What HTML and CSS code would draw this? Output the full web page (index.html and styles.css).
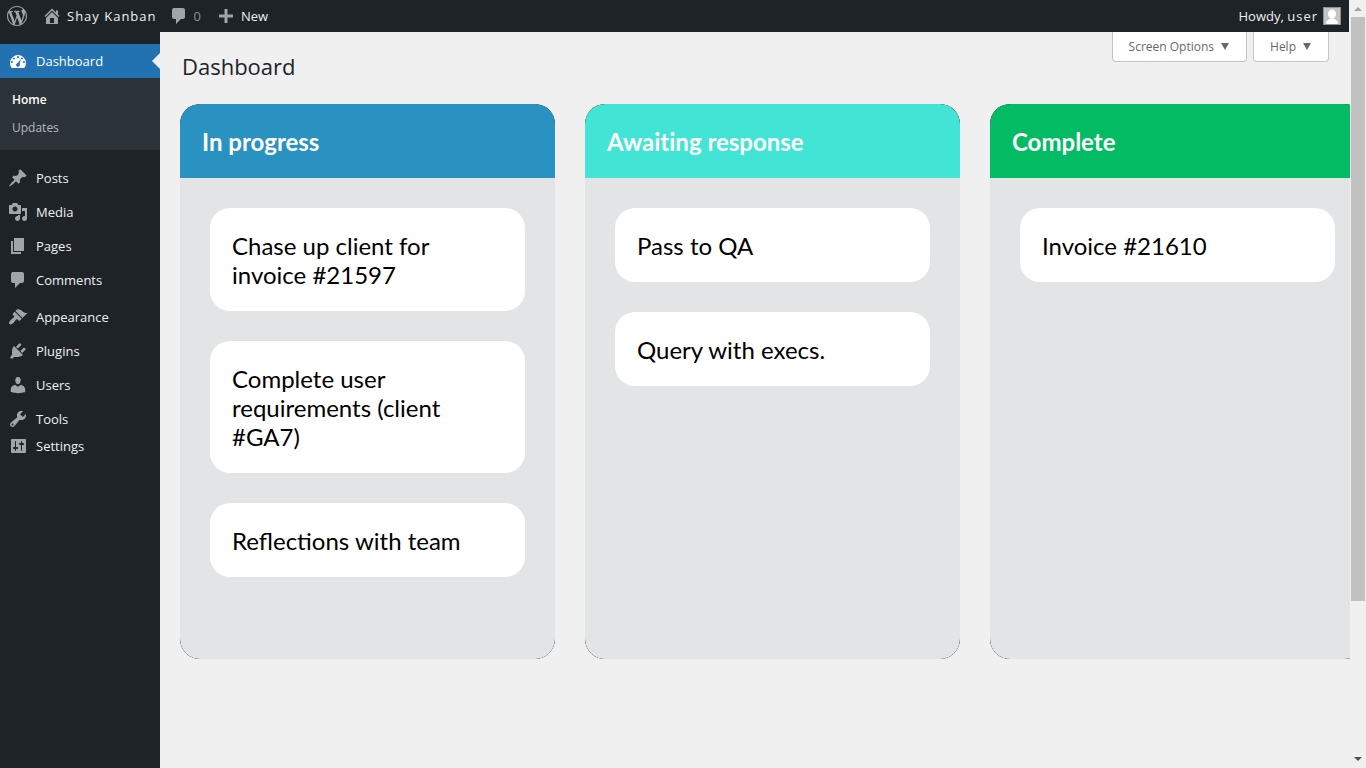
FILE: index.html
```html
<!DOCTYPE html>
<html lang="en">
<head>
<meta charset="utf-8">
<meta name="viewport" content="width=device-width, initial-scale=1">
<title>Dashboard - Shay Kanban</title>
<link rel="stylesheet" href="styles.css">
</head>
<body>
<div class="page">
  <div class="app">
    <header class="adminbar">
      <a class="bar-item bar-logo" href="#" aria-label="About WordPress"><svg class="icon" viewBox="0 0 20 20"><path d="M20 10c0-5.510-4.490-10-10-10C4.480 0 0 4.490 0 10c0 5.520 4.480 10 10 10 5.510 0 10-4.480 10-10zM7.780 15.370L4.370 6.220c.55-.02 1.170-.08 1.170-.08.5-.06.44-1.130-.06-1.110 0 0-1.450.11-2.370.11-.18 0-.37 0-.58-.01C4.120 2.690 6.870 1.110 10 1.110c2.330 0 4.450.87 6.050 2.340-.68-.11-1.650.39-1.650 1.580 0 .74.45 1.360.9 2.100.35.61.55 1.360.55 2.460 0 1.490-1.400 5-1.400 5l-3.030-8.370c.54-.02.82-.17.82-.17.5-.05.44-1.250-.06-1.220 0 0-1.440.12-2.380.12-.87 0-2.330-.12-2.330-.12-.5-.03-.56 1.200-.06 1.220l.92.08 1.260 3.410zM17.410 10c.24-.64.74-1.870.43-4.250.7 1.290 1.050 2.710 1.050 4.250 0 3.290-1.730 6.240-4.400 7.780.97-2.590 1.940-5.200 2.920-7.780zM6.100 18.090C3.120 16.650 1.110 13.530 1.110 10c0-1.300.23-2.480.72-3.590C3.250 10.300 4.670 14.200 6.100 18.090zm4.030-6.630l2.580 6.980c-.86.29-1.760.45-2.710.45-.79 0-1.570-.11-2.290-.33.81-2.380 1.620-4.740 2.420-7.100z"/></svg></a>
      <a class="bar-item bar-site" href="#"><svg class="icon" viewBox="0 0 20 20"><path fill-rule="evenodd" d="M16 8.500l1.530 1.530-1.060 1.060L10 4.600l-6.470 6.490-1.060-1.060L10 2.500l4 4v-2h2v4zm-6-2.460l6 5.990V18H4v-5.970zM12 17v-5H8v5h4z"/></svg><span>Shay Kanban</span></a>
      <a class="bar-item bar-comments" href="#" aria-label="0 comments"><svg class="icon" viewBox="0 0 20 20"><path d="M5 2h9c1.100 0 2 .9 2 2v7c0 1.100-.9 2-2 2h-2l-5 5v-5H5c-1.100 0-2-.9-2-2V4c0-1.100.9-2 2-2z"/></svg><span>0</span></a>
      <a class="bar-item" href="#"><svg class="icon" viewBox="0 0 20 20"><path d="M17 8.500v3h-5.500V17h-3v-5.500H3v-3h5.500V3h3v5.500z"/></svg><span>New</span></a>
      <a class="bar-item bar-user" href="#"><span>Howdy, <b>user</b></span><svg class="avatar" viewBox="0 0 18 18"><rect class="avatar-frame" width="18" height="18"/><rect class="avatar-fill" x="1" y="1" width="16" height="16"/><ellipse class="avatar-body" cx="9" cy="7" rx="4" ry="4.500"/><path class="avatar-body" d="M3 17c0-2.500 1-4 4.500-5.500h3C14 13 15 14.500 15 17z"/></svg></a>
    </header>

    <nav class="sidebar" aria-label="Main menu">
      <a class="menu-item current" href="#"><svg class="icon" viewBox="0 0 20 20"><path fill-rule="evenodd" d="M3.760 17h12.480A8 8 0 1 0 3.760 17zM10 5a1 1 0 1 1 0 2 1 1 0 0 1 0-2zM6 6.500a1 1 0 1 1 0 2 1 1 0 0 1 0-2zm8 0a1 1 0 1 1 0 2 1 1 0 0 1 0-2zm-9 4.500a1 1 0 1 1-2 0 1 1 0 0 1 2 0zm12 0a1 1 0 1 1-2 0 1 1 0 0 1 2 0zm-4.300-3.100l-1 5.300c.5 1.300-.3 2.500-1.700 2.500s-2.200-1.400-1.700-2.500c.3-.7.8-1 1.500-1.100z"/></svg><span>Dashboard</span></a>
      <div class="submenu">
        <a class="active" href="#">Home</a>
        <a href="#">Updates</a>
      </div>
      <div class="menu-group">
        <a class="menu-item" href="#"><svg class="icon" viewBox="0 0 20 20"><path d="M10.440 3.020l1.820-1.820 6.360 6.350-1.830 1.820c-1.050-.68-2.480-.57-3.410.36l-.75.75c-.92.93-1.040 2.350-.35 3.410l-1.830 1.820-2.410-2.410-2.800 2.790c-.42.42-3.380 2.710-3.800 2.290s1.860-3.390 2.280-3.810l2.790-2.790L4.100 9.360l1.830-1.820c1.050.69 2.480.57 3.400-.36l.75-.75c.93-.92 1.050-2.350.36-3.410z"/></svg><span>Posts</span></a>
        <a class="menu-item" href="#"><svg class="icon" viewBox="0 0 20 20"><path fill-rule="evenodd" d="M13 11V4c0-.55-.45-1-1-1h-1.670L9 1H5L3.670 3H2c-.55 0-1 .45-1 1v7c0 .55.45 1 1 1h10c.55 0 1-.45 1-1zM7 4.500c1.380 0 2.500 1.120 2.500 2.500S8.380 9.500 7 9.500 4.500 8.380 4.500 7 5.620 4.500 7 4.500zM14 6h5v10.500c0 1.380-1.120 2.500-2.500 2.500S14 17.880 14 16.500s1.120-2.500 2.500-2.500c.17 0 .34.020.5.050V9h-3V6zm-4 8.050V13h2v3.500c0 1.380-1.120 2.500-2.500 2.500S7 17.880 7 16.500 8.120 14 9.500 14c.17 0 .34.020.5.050z"/></svg><span>Media</span></a>
        <a class="menu-item" href="#"><svg class="icon" viewBox="0 0 20 20"><path d="M6 15V2h10v13H6zm-1 1h8v2H3V5h2v11z"/></svg><span>Pages</span></a>
        <a class="menu-item" href="#"><svg class="icon" viewBox="0 0 20 20"><path d="M5 2h9c1.100 0 2 .9 2 2v7c0 1.100-.9 2-2 2h-2l-5 5v-5H5c-1.100 0-2-.9-2-2V4c0-1.100.9-2 2-2z"/></svg><span>Comments</span></a>
      </div>
      <div class="menu-group">
        <a class="menu-item" href="#"><svg class="icon" viewBox="0 0 20 20"><path d="M14.480 11.060L7.410 3.990l1.500-1.500c.5-.56 2.300-.47 3.510.32 1.210.8 1.430 1.280 2.910 2.100 1.180.64 2.450 1.260 4.450.85zm-.71.71L6.700 4.700 4.930 6.470c-.39.39-.39 1.020 0 1.410l1.060 1.060c.39.39.39 1.030 0 1.420-.6.6-1.430 1.110-2.210 1.690-.35.26-.7.53-1.010.84C1.430 14.230.4 16.080 1.400 17.070c.99 1 2.840-.03 4.180-1.360.31-.31.58-.66.85-1.020.57-.78 1.080-1.610 1.690-2.210.39-.39 1.020-.39 1.410 0l1.060 1.060c.39.39 1.020.39 1.410 0z"/></svg><span>Appearance</span></a>
        <a class="menu-item" href="#"><svg class="icon" viewBox="0 0 20 20"><path d="M13.110 4.360L9.870 7.600 8 5.730l3.240-3.240c.35-.34 1.050-.2 1.560.32.52.51.66 1.210.31 1.550zm-8 1.770l.91-1.120 9.010 9.010-1.190.84c-.71.71-2.630 1.160-3.820 1.160H6.140L4.900 17.260c-.59.59-1.540.59-2.120 0-.59-.58-.59-1.530 0-2.120l1.240-1.240v-3.880c0-1.130.4-3.190 1.090-3.890zm7.260 3.970l3.240-3.240c.34-.35 1.040-.21 1.550.31.52.51.66 1.210.31 1.550l-3.240 3.250z"/></svg><span>Plugins</span></a>
        <a class="menu-item" href="#"><svg class="icon" viewBox="0 0 20 20"><path d="M10 9.250c-2.270 0-2.730-3.440-2.730-3.440C7 4.020 7.820 2 9.970 2c2.160 0 2.980 2.020 2.710 3.810 0 0-.41 3.440-2.680 3.440zm0 2.570L12.720 10c2.390 0 4.520 2.330 4.520 4.530v2.490s-3.650 1.130-7.240 1.130c-3.650 0-7.240-1.130-7.240-1.130v-2.490c0-2.250 1.940-4.480 4.470-4.480z"/></svg><span>Users</span></a>
        <a class="menu-item" href="#"><svg class="icon" viewBox="0 0 20 20"><path fill-rule="evenodd" d="M16.680 9.770c-1.340 1.340-3.300 1.670-4.950.99l-5.410 6.520c-.99.99-2.590.99-3.580 0s-.99-2.590 0-3.570l6.520-5.420c-.68-1.650-.35-3.610.99-4.950 1.280-1.280 3.120-1.620 4.720-1.060l-2.890 2.890 2.820 2.820 2.860-2.870c.53 1.580.18 3.390-1.080 4.650zM3.810 16.210c.4.390 1.040.39 1.430 0 .4-.4.4-1.040 0-1.430-.39-.4-1.030-.4-1.430 0-.39.39-.39 1.030 0 1.430z"/></svg><span>Tools</span></a>
        <a class="menu-item compact" href="#"><svg class="icon" viewBox="0 0 20 20"><path fill-rule="evenodd" d="M18 16V4c0-.55-.45-1-1-1H4c-.55 0-1 .45-1 1v12c0 .55.45 1 1 1h13c.55 0 1-.45 1-1zM8 11h1c.55 0 1 .45 1 1s-.45 1-1 1H8v1.500c0 .28-.22.5-.5.5s-.5-.22-.5-.5V13H6c-.55 0-1-.45-1-1s.45-1 1-1h1V5.500c0-.28.22-.5.5-.5s.5.220.5.500V11zm5-2h-1c-.55 0-1-.45-1-1s.45-1 1-1h1V5.500c0-.28.22-.5.5-.5s.5.220.5.500V7h1c.55 0 1 .45 1 1s-.45 1-1 1h-1v5.500c0 .28-.22.5-.5.5s-.5-.22-.5-.5V9z"/></svg><span>Settings</span></a>
      </div>
    </nav>

    <main class="content">
      <div class="content-head">
        <h1>Dashboard</h1>
        <div class="screen-meta">
          <button class="meta-tab" type="button">Screen Options<svg class="caret" viewBox="0 0 8 7"><path d="M0 0h8L4 7z"/></svg></button>
          <button class="meta-tab" type="button">Help<svg class="caret" viewBox="0 0 8 7"><path d="M0 0h8L4 7z"/></svg></button>
        </div>
      </div>
      <div class="board">
        <section class="column progress">
          <h2>In progress</h2>
          <div class="cards">
            <article class="card">Chase up client for invoice #21597</article>
            <article class="card">Complete user requirements (client #GA7)</article>
            <article class="card">Reflections with team</article>
          </div>
        </section>
        <section class="column awaiting">
          <h2>Awaiting response</h2>
          <div class="cards">
            <article class="card">Pass to QA</article>
            <article class="card">Query with execs.</article>
          </div>
        </section>
        <section class="column complete">
          <h2>Complete</h2>
          <div class="cards">
            <article class="card">Invoice #21610</article>
          </div>
        </section>
      </div>
    </main>
  </div>
  <div class="scrollbar" aria-hidden="true">
    <svg class="arrow arrow-up" viewBox="0 0 8 4"><path d="M0 4h8L4 0z"/></svg>
    <div class="track"><div class="thumb"></div></div>
    <svg class="arrow" viewBox="0 0 8 4"><path d="M0 0h8L4 4z"/></svg>
  </div>
</div>
</body>
</html>
```
FILE: styles.css
```css
* { box-sizing: border-box; }

body {
  margin: 0;
  background: #f0f0f0;
  color: #1d2327;
  font: 13px/20px "Segoe UI", "Open Sans", "Noto Sans", sans-serif;
}

a { color: inherit; text-decoration: none; }

.page {
  display: grid;
  grid-template-columns: minmax(0, 1fr) 16px;
  height: 100vh;
  overflow: hidden;
}

.app {
  display: grid;
  grid-template-columns: 160px minmax(0, 1fr);
  grid-template-rows: 32px minmax(0, 1fr);
  min-height: 0;
}

.icon {
  flex: none;
  width: 20px;
  height: 20px;
  fill: #a0a5aa;
}

/* Admin bar */
.adminbar {
  grid-column: 1 / -1;
  display: flex;
  align-items: center;
  margin-right: 1px;
  padding: 0 8px 0 7px;
  background: #1d2327;
  color: #f0f0f1;
}
.bar-item { display: flex; align-items: center; gap: 5px; }
.bar-logo { margin-right: 15px; }
.bar-site { margin-right: 12px; letter-spacing: 1px; }
.bar-comments { margin-right: 15px; color: #8c9196; }
.bar-user { margin-left: auto; }
.bar-user b { font-weight: 400; letter-spacing: 1px; }
.avatar { width: 18px; height: 18px; }
.avatar-frame { fill: #8c8f94; }
.avatar-fill { fill: #c4c4c4; }
.avatar-body { fill: #fff; }

/* Sidebar */
.sidebar { background: #1d2327; color: #f0f0f1; padding-top: 12px; }
.menu-item {
  display: flex;
  align-items: center;
  gap: 8px;
  height: 34px;
  padding-left: 8px;
}
.menu-item.compact { height: 20px; }
.menu-item.current { position: relative; background: #2271b1; color: #fff; }
.menu-item.current .icon { fill: #fff; }
.menu-item.current::after {
  content: "";
  position: absolute;
  right: 0;
  top: 9px;
  border: 8px solid transparent;
  border-left: 0;
  border-right-color: #f0f0f0;
}
.submenu {
  display: flex;
  flex-direction: column;
  gap: 8px;
  padding: 12px;
  background: #2c3338;
  color: #b4b9be;
  font-size: 12px;
}
.submenu .active { color: #fff; font-weight: 600; }
.menu-group { padding-top: 3px; }
.submenu + .menu-group { padding-top: 11px; }

/* Content */
.content { min-width: 0; padding-left: 20px; overflow: hidden; }
.content-head {
  display: flex;
  justify-content: space-between;
  align-items: flex-start;
  height: 72px;
  padding: 0 21px 0 2px;
}
h1 { margin: 0; padding-top: 19px; font-size: 22px; font-weight: 400; line-height: 30px; }
.screen-meta { display: flex; gap: 6px; }
.meta-tab {
  display: flex;
  align-items: center;
  gap: 7px;
  height: 30px;
  padding: 0 17px 0 16px;
  border: 1px solid #c3c4c7;
  border-top: 0;
  border-radius: 0 0 4px 4px;
  background: #fff;
  color: #646970;
  font: inherit;
  font-size: 12px;
}
.caret { width: 8px; height: 7px; fill: #646970; }

/* Kanban board */
.board {
  display: flex;
  gap: 30px;
  color: #000;
  font: 24px/29px Lato, sans-serif;
}
.column {
  flex: none;
  display: flex;
  flex-direction: column;
  width: 375px;
  border-radius: 20px;
  overflow: hidden;
  background: #17303f;
}
.column h2 {
  margin: 0;
  padding: 23px 22px 22px;
  border-radius: 20px 20px 0 0;
  color: #fff;
  font-size: 24px;
  font-weight: 700;
  font-variant-ligatures: none;
}
.progress h2 { background: #2a92c1; }
.awaiting h2 { background: #42e5d5; }
.complete h2 { background: #03bb62; }
.cards {
  flex: 1;
  display: flex;
  flex-direction: column;
  gap: 30px;
  padding: 30px 30px 82px;
  border-radius: 0 0 20px 20px;
  background: #e2e4e6;
}
.card { padding: 23px 22px 22px; border-radius: 20px; background: #fff; }

/* Scrollbar */
.scrollbar {
  display: flex;
  flex-direction: column;
  align-items: center;
  gap: 6px;
  padding: 7px 0;
  background: #f0f0f0;
}
.arrow { flex: none; width: 8px; height: 4px; fill: #505050; }
.arrow-up { fill: #a3a3a3; }
.track { flex: 1; width: 14px; }
.thumb { height: calc(100% - 150px); background: #c1c1c1; }
```
